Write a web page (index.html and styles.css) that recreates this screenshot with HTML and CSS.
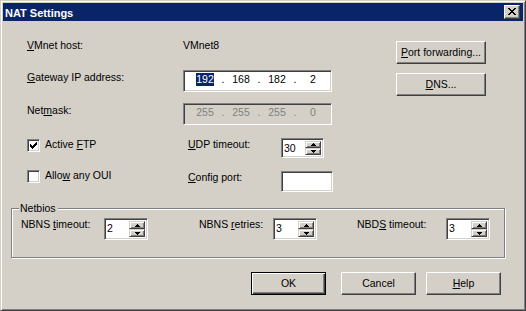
FILE: index.html
```html
<!DOCTYPE html>
<html>
<head>
<meta charset="utf-8">
<link rel="stylesheet" href="styles.css">
</head>
<body>
<div class="window">
  <div class="titlebar">
    <span class="title">NAT Settings</span>
    <button class="close" aria-label="Close">
      <svg width="8" height="7" viewBox="0 0 8 7" shape-rendering="crispEdges"><path d="M0 0h2v1h-2zM6 0h2v1h-2zM1 1h2v1h-2zM5 1h2v1h-2zM2 2h4v1h-4zM3 3h2v1h-2zM2 4h4v1h-4zM1 5h2v1h-2zM5 5h2v1h-2zM0 6h2v1h-2zM6 6h2v1h-2z" fill="#000"/></svg>
    </button>
  </div>
  <div class="content">
    <div class="top">
      <div class="fields">
        <div class="row r1">
          <span class="lbl w156"><u>V</u>Mnet host:</span>
          <span class="lbl">VMnet8</span>
        </div>
        <div class="row r2">
          <span class="lbl w156 mt1"><u>G</u>ateway IP address:</span>
          <div class="ipbox">
            <span class="seg"><span class="sel">192</span></span><span class="dot">.</span><span class="seg">168</span><span class="dot">.</span><span class="seg">182</span><span class="dot">.</span><span class="seg">2</span>
          </div>
        </div>
        <div class="row r3">
          <span class="lbl w156 mt1">Net<u>m</u>ask:</span>
          <div class="ipbox disabled">
            <span class="seg">255</span><span class="dot">.</span><span class="seg">255</span><span class="dot">.</span><span class="seg">255</span><span class="dot">.</span><span class="seg">0</span>
          </div>
        </div>
        <div class="row r4">
          <div class="check w161">
            <span class="cbox mt1">
              <svg width="7" height="7" viewBox="0 0 7 7" shape-rendering="crispEdges"><path d="M6 0h1v1h-1zM5 1h2v1h-2zM0 2h1v1h-1zM4 2h3v1h-3zM0 3h2v1h-2zM3 3h3v1h-3zM0 4h5v1h-5zM1 5h3v1h-3zM2 6h1v1h-1z" fill="#000"/></svg>
            </span>
            <span class="lbl">Active <u>F</u>TP</span>
          </div>
          <span class="lbl w93"><u>U</u>DP timeout:</span>
          <div class="spin s43 h20">
            <span class="val">30</span>
            <div class="arrows">
              <span class="arr"><svg width="5" height="3" viewBox="0 0 5 3" shape-rendering="crispEdges"><path d="M2 0h1v1h-1zM1 1h3v1h-3zM0 2h5v1h-5z" fill="#000"/></svg></span>
              <span class="arr"><svg width="5" height="3" viewBox="0 0 5 3" shape-rendering="crispEdges"><path d="M0 0h5v1h-5zM1 1h3v1h-3zM2 2h1v1h-1z" fill="#000"/></svg></span>
            </div>
          </div>
        </div>
        <div class="row r5">
          <div class="check w161">
            <span class="cbox mt1"></span>
            <span class="lbl">Allo<u>w</u> any OUI</span>
          </div>
          <span class="lbl w93 mt2"><u>C</u>onfig port:</span>
          <div class="edit mt2"></div>
        </div>
      </div>
      <div class="side">
        <button class="btn"><u>P</u>ort forwarding...</button>
        <button class="btn"><u>D</u>NS...</button>
      </div>
    </div>

    <div class="group">
      <span class="legend">Netbios</span>
      <div class="grow">
        <span class="lbl w83">NBNS <u>t</u>imeout:</span>
        <div class="spin s44 h22">
          <span class="val">2</span>
          <div class="arrows">
            <span class="arr"><svg width="5" height="3" viewBox="0 0 5 3" shape-rendering="crispEdges"><path d="M2 0h1v1h-1zM1 1h3v1h-3zM0 2h5v1h-5z" fill="#000"/></svg></span>
            <span class="arr"><svg width="5" height="3" viewBox="0 0 5 3" shape-rendering="crispEdges"><path d="M0 0h5v1h-5zM1 1h3v1h-3zM2 2h1v1h-1z" fill="#000"/></svg></span>
          </div>
        </div>
        <span class="lbl w74 ml51">NBNS <u>r</u>etries:</span>
        <div class="spin s44 h22">
          <span class="val">3</span>
          <div class="arrows">
            <span class="arr"><svg width="5" height="3" viewBox="0 0 5 3" shape-rendering="crispEdges"><path d="M2 0h1v1h-1zM1 1h3v1h-3zM0 2h5v1h-5z" fill="#000"/></svg></span>
            <span class="arr"><svg width="5" height="3" viewBox="0 0 5 3" shape-rendering="crispEdges"><path d="M0 0h5v1h-5zM1 1h3v1h-3zM2 2h1v1h-1z" fill="#000"/></svg></span>
          </div>
        </div>
        <span class="lbl w89 ml40">NBD<u>S</u> timeout:</span>
        <div class="spin s44 h22">
          <span class="val">3</span>
          <div class="arrows">
            <span class="arr"><svg width="5" height="3" viewBox="0 0 5 3" shape-rendering="crispEdges"><path d="M2 0h1v1h-1zM1 1h3v1h-3zM0 2h5v1h-5z" fill="#000"/></svg></span>
            <span class="arr"><svg width="5" height="3" viewBox="0 0 5 3" shape-rendering="crispEdges"><path d="M0 0h5v1h-5zM1 1h3v1h-3zM2 2h1v1h-1z" fill="#000"/></svg></span>
          </div>
        </div>
      </div>
    </div>

    <div class="actions">
      <button class="btn default">OK</button>
      <button class="btn ml15">Cancel</button>
      <button class="btn ml10"><u>H</u>elp</button>
    </div>
  </div>
</div>
</body>
</html>
```
FILE: styles.css
```css
* { box-sizing: border-box; }
html, body { margin: 0; padding: 0; background: #d4d0c8; }
body {
  font-family: "Liberation Sans", Arial, sans-serif;
  font-size: 10.5px;
  line-height: 13px;
  color: #000;
}
button { font: inherit; color: inherit; margin: 0; padding: 0; }
u { text-decoration: underline; text-underline-offset: 1px; }

.window {
  width: 526px;
  height: 311px;
  background: #d4d0c8;
  border: 1px solid;
  border-color: #d4d0c8 #404040 #404040 #d4d0c8;
  box-shadow: inset 1px 1px #fff, inset -1px -1px #808080;
  padding: 2px;
  display: flex;
  flex-direction: column;
  overflow: hidden;
}

.titlebar {
  height: 18px;
  background: #0a246a;
  display: flex;
  align-items: center;
  justify-content: space-between;
  padding: 0 3px 0 2px;
  flex: none;
}
.title {
  color: #fff;
  font-weight: bold;
  font-size: 11px;
  line-height: 18px;
  padding-top: 1px;
}
.close {
  width: 16px;
  height: 14px;
  background: #d4d0c8;
  border: 1px solid;
  border-color: #fff #404040 #404040 #fff;
  box-shadow: inset -1px -1px #808080;
  display: flex;
  align-items: flex-start;
  justify-content: flex-start;
  padding: 2px 0 0 3px;
}
.close svg { display: block; }

.content { flex: 1; display: flex; flex-direction: column; }

.top { display: flex; margin-top: 18px; }
.fields { margin-left: 24px; width: 306px; display: flex; flex-direction: column; }
.side { margin-left: 63px; margin-top: 2px; display: flex; flex-direction: column; gap: 9px; }

.row { display: flex; align-items: flex-start; }
.r1 { height: 13px; }
.r2 { margin-top: 18px; }
.r3 { margin-top: 11px; }
.r4 { margin-top: 13px; }
.r5 { margin-top: 11px; }

.lbl { white-space: nowrap; flex: none; }
.w156 { width: 156px; }
.w161 { width: 161px; }
.w93 { width: 93px; }
.w83 { width: 83px; }
.w74 { width: 74px; }
.w89 { width: 89px; }
.mt1 { margin-top: 1px; }
.mt2 { margin-top: 2px; }
.ml51 { margin-left: 51px; }
.ml40 { margin-left: 40px; }
.ml15 { margin-left: 15px; }
.ml10 { margin-left: 10px; }

.ipbox, .edit, .spin, .cbox {
  border: 1px solid;
  border-color: #808080 #fff #fff #808080;
  box-shadow: inset 1px 1px #404040, inset -1px -1px #d4d0c8;
  background: #fff;
  flex: none;
}
.ipbox {
  width: 149px;
  height: 22px;
  display: flex;
  align-items: flex-start;
  padding: 2px 0 0 6px;
}
.ipbox.disabled { background: #d4d0c8; color: #808080; }
.seg { width: 30px; text-align: center; }
.dot { width: 6px; text-align: center; }
.sel { background: #0a246a; color: #fff; display: inline-block; line-height: 13px; }

.check { display: flex; align-items: flex-start; gap: 5px; flex: none; }
.cbox {
  width: 13px;
  height: 13px;
  display: flex;
  padding: 2px 0 0 2px;
}
.cbox svg { display: block; }

.edit { width: 52px; height: 21px; }

.spin { display: flex; padding: 2px; }
.s43 { width: 43px; }
.s44 { width: 44px; }
.h20 { height: 20px; }
.h22 { height: 22px; }
.val { flex: 1; padding-left: 0; line-height: 14px; }
.arrows { width: 16px; display: flex; flex-direction: column; }
.arr {
  flex: 1;
  background: #d4d0c8;
  border: 1px solid;
  border-color: #d4d0c8 #404040 #404040 #d4d0c8;
  box-shadow: inset 1px 1px #fff, inset -1px -1px #808080;
  display: flex;
  align-items: center;
  justify-content: center;
}
.arr svg { display: block; }

.btn {
  width: 90px;
  height: 23px;
  background: #d4d0c8;
  border: 1px solid;
  border-color: #fff #404040 #404040 #fff;
  box-shadow: inset -1px -1px #808080;
  text-align: center;
  line-height: 13px;
  flex: none;
}
.actions .btn { width: 75px; }
.btn.default {
  border-color: #000;
  box-shadow: inset 1px 1px #fff, inset -1px -1px #404040, inset -2px -2px #808080;
}

.group {
  margin: 16px 0 0 8px;
  width: 494px;
  height: 50px;
  border: 1px solid #808080;
  box-shadow: inset 1px 1px #fff, 1px 1px #fff;
  display: flex;
  flex-direction: column;
}
.legend {
  align-self: flex-start;
  margin: -7px 0 0 7px;
  padding: 0 2px 0 1px;
  background: #d4d0c8;
  height: 13px;
}
.grow { display: flex; align-items: flex-start; margin-top: 3px; padding-left: 9px; }

.actions { display: flex; margin: 14px 0 0 248px; }
```
